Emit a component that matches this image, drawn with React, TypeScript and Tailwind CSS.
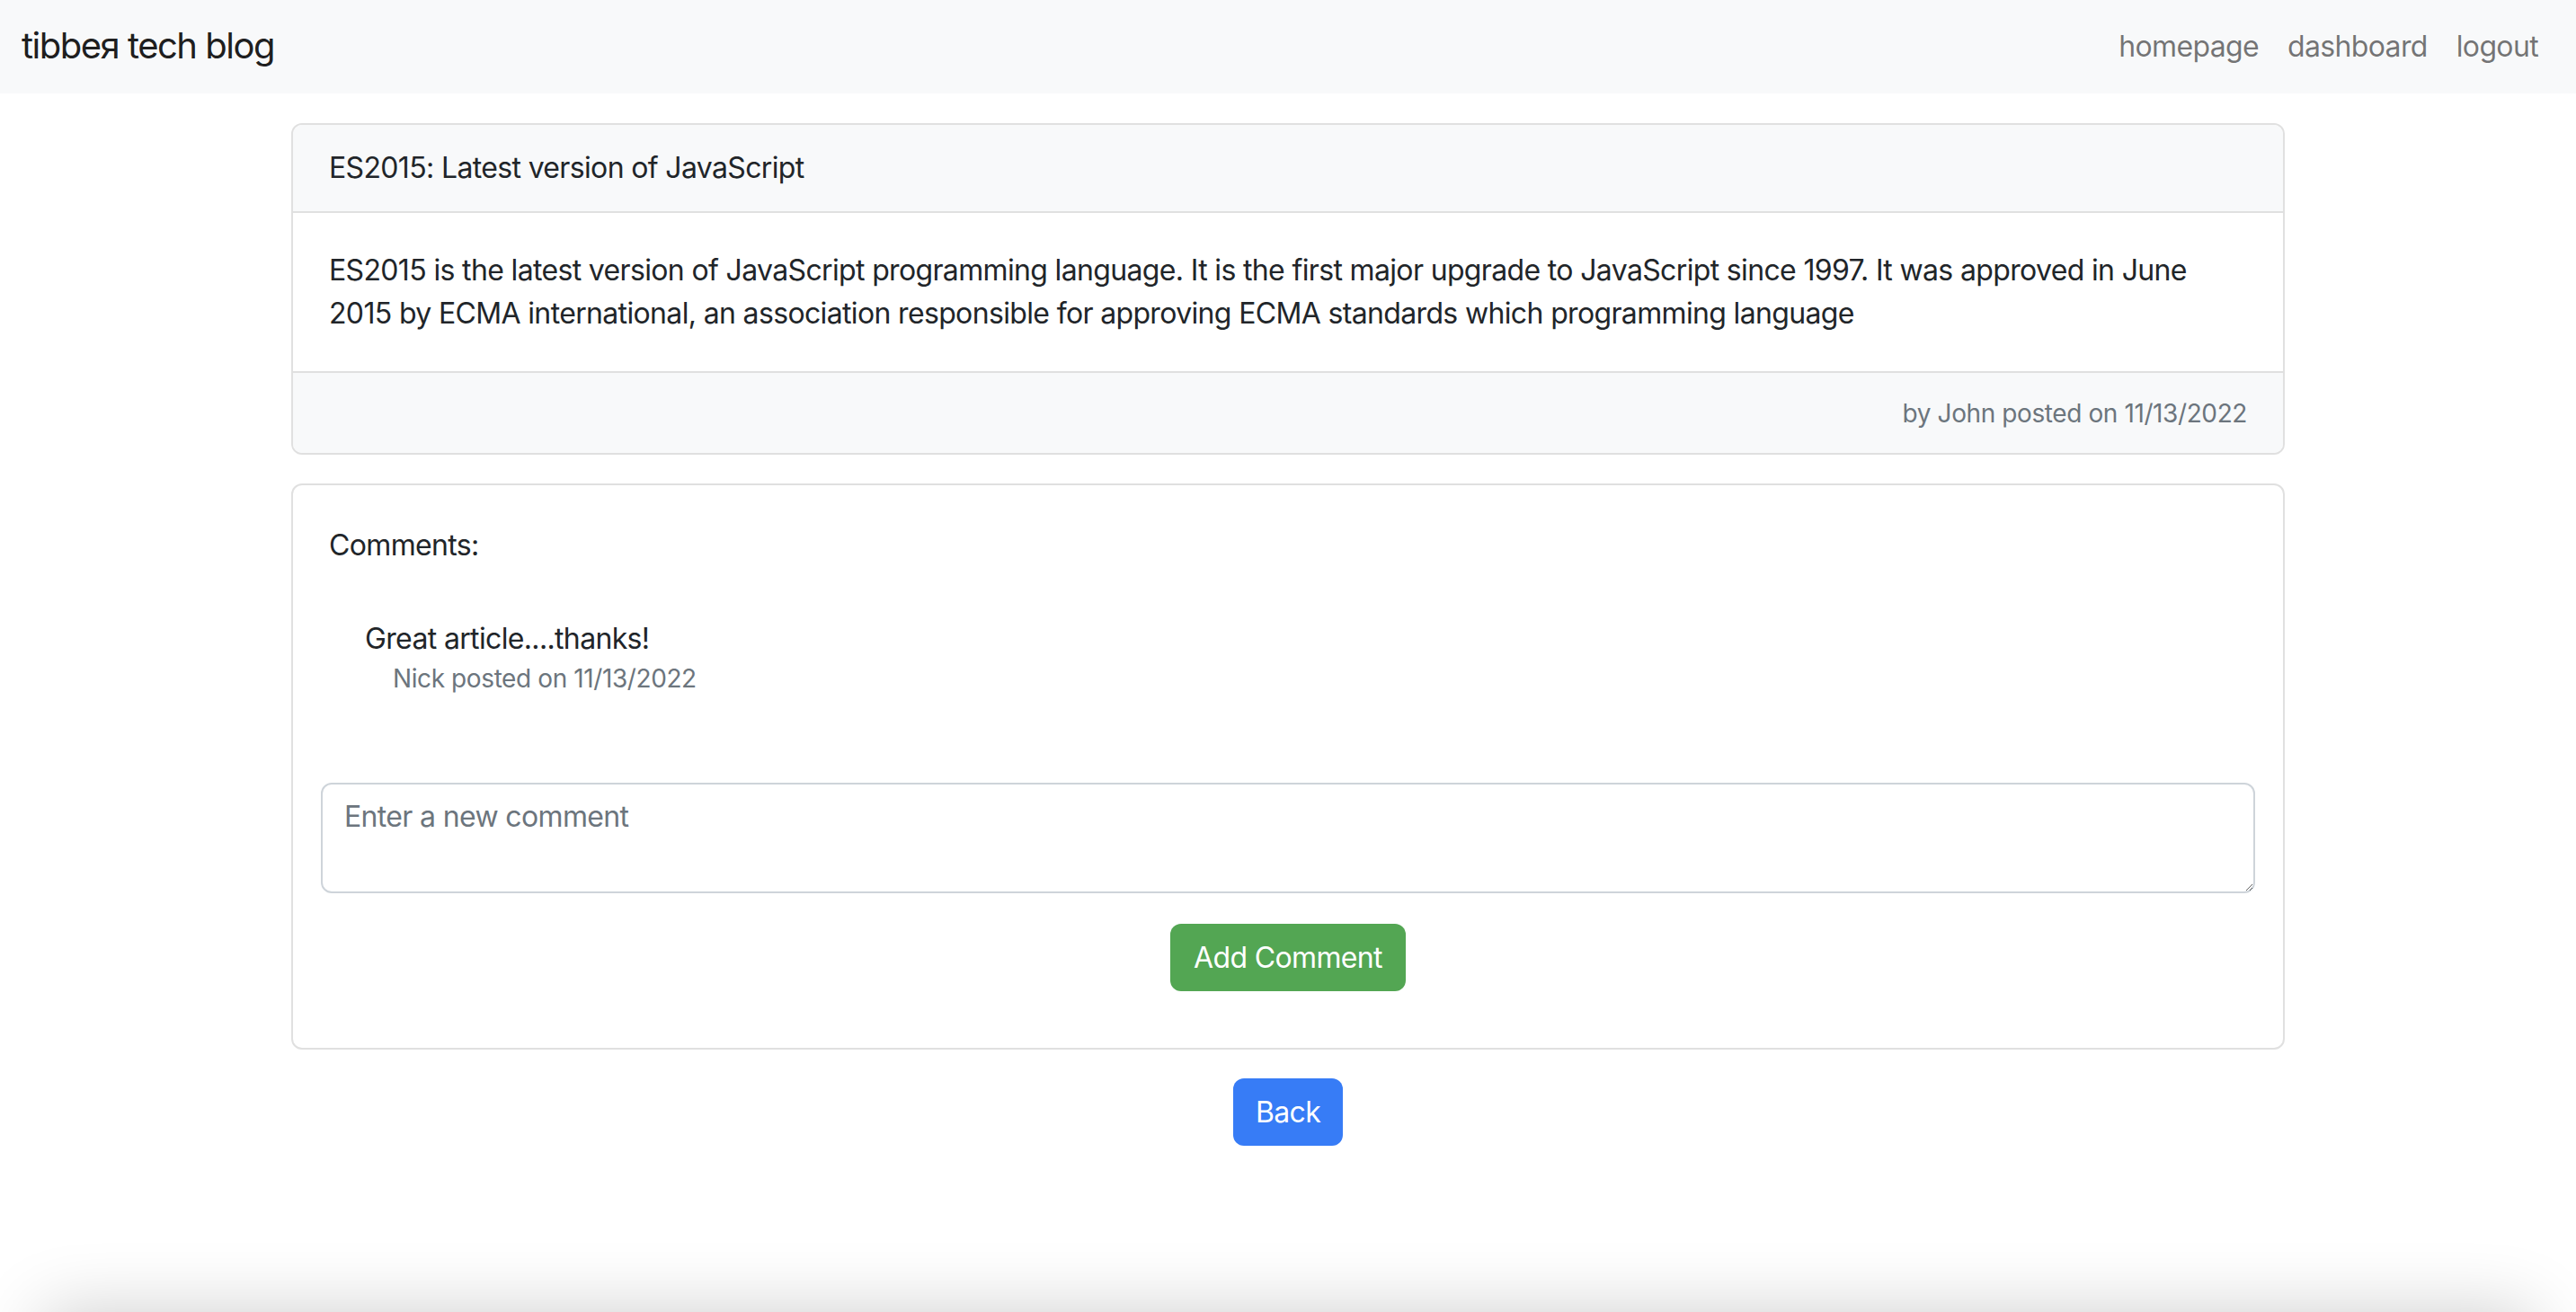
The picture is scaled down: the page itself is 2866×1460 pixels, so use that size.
const NAV_LINKS = ["homepage", "dashboard", "logout"];

const App = () => {
  return (
    <div className="h-[1460px] overflow-hidden bg-white font-['Inter',sans-serif] text-[32px] leading-[48px] tracking-[-0.65px] text-[#212529]">
      <div className="min-h-[1460px]">
        {/* Navbar */}
        <nav className="flex h-[104px] items-center justify-between bg-[#f8f9fa] pl-[24px] pr-[26px]">
          <a href="#" className="mb-[2px] text-[40px] leading-[60px] tracking-[-1.5px] text-black/90">
            tibbeя tech blog
          </a>
          <ul className="flex">
            {NAV_LINKS.map((link) => (
              <li key={link}>
                <a href="#" className="block px-[16px] text-black/55">
                  {link}
                </a>
              </li>
            ))}
          </ul>
        </nav>

        <main className="mx-auto w-[2218px] pt-[33px]">
          {/* Post card */}
          <article className="overflow-hidden rounded-[12px] border-2 border-[#e0e0e0]">
            <header className="border-b-2 border-[#e0e0e0] bg-[#f8f9fa] px-[40px] py-[24px]">
              ES2015: Latest version of JavaScript
            </header>
            <div className="px-[40px] py-[40px]">
              ES2015 is the latest version of JavaScript programming language.
              It is the first major upgrade to JavaScript since 1997. It was
              approved in June 2015 by ECMA international, an association
              responsible for approving ECMA standards which programming
              language
            </div>
            <footer className="border-t-2 border-[#e0e0e0] bg-[#f8f9fa] px-[40px] py-[20px] text-right">
              <span className="text-[28px] tracking-[-0.4px] text-[#6c757d]">
                by John posted on 11/13/2022
              </span>
            </footer>
          </article>

          {/* Comments card */}
          <section className="mt-[32px] rounded-[12px] border-2 border-[#e0e0e0] pb-[63px]">
            <div className="px-[40px] pt-[43px]">
              <h2>Comments:</h2>
              <ul className="mt-[58px] pl-[40px]">
                <li>
                  <p className="leading-[44px]">Great article....thanks!</p>
                  <p className="pl-[31px] text-[28px] leading-[44px] tracking-[-0.4px] text-[#6c757d]">
                    Nick posted on 11/13/2022
                  </p>
                </li>
              </ul>
            </div>
            <form className="mt-[94px] flex flex-col items-center px-[31px]">
              <textarea
                placeholder="Enter a new comment"
                className="h-[123px] w-full rounded-[12px] border-2 border-[#ced4da] px-[24px] py-[12px] leading-[48px] placeholder:text-[#6c757d] focus:outline-none"
              />
              <button
                type="button"
                className="mt-[34px] h-[75px] rounded-[12px] bg-[#53a653] px-[26px] text-white"
              >
                Add Comment
              </button>
            </form>
          </section>

          <div className="mt-[32px] flex justify-center">
            <button
              type="button"
              className="h-[75px] rounded-[12px] bg-[#377cf6] px-[25px] text-white"
            >
              Back
            </button>
          </div>
        </main>
      </div>

      {/* Footer peeking in from below the fold */}
      <footer className="mx-[48px] h-[160px] shadow-[0_0_80px_rgba(0,0,0,0.2)]" />
    </div>
  );
};

export default App;
